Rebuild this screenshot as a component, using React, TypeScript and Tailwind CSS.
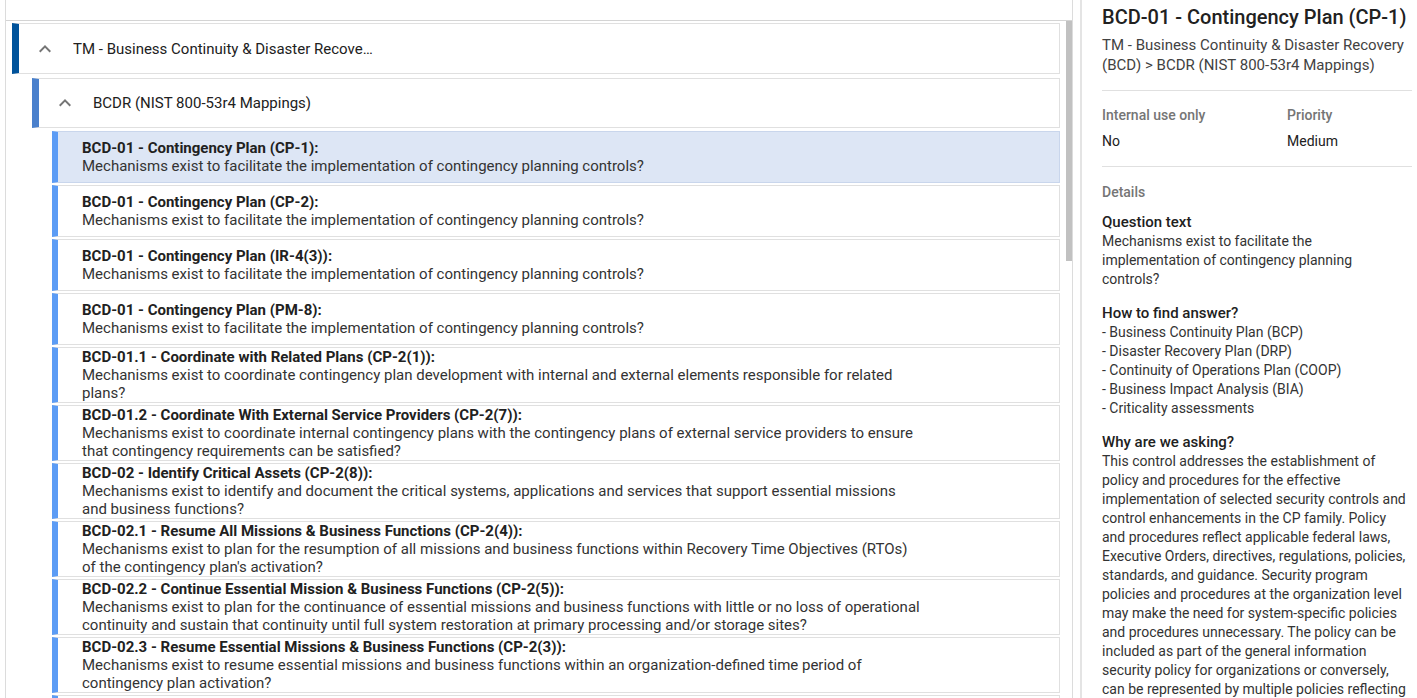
import React from 'react';

type Pregunta = {
  id: string;
  titulo: string;
  texto: string;
};

const PREGUNTAS: Pregunta[] = [
  {
    id: 'cp1',
    titulo: 'BCD-01 - Contingency Plan (CP-1):',
    texto: 'Mechanisms exist to facilitate the implementation of contingency planning controls?',
  },
  {
    id: 'cp2',
    titulo: 'BCD-01 - Contingency Plan (CP-2):',
    texto: 'Mechanisms exist to facilitate the implementation of contingency planning controls?',
  },
  {
    id: 'ir43',
    titulo: 'BCD-01 - Contingency Plan (IR-4(3)):',
    texto: 'Mechanisms exist to facilitate the implementation of contingency planning controls?',
  },
  {
    id: 'pm8',
    titulo: 'BCD-01 - Contingency Plan (PM-8):',
    texto: 'Mechanisms exist to facilitate the implementation of contingency planning controls?',
  },
  {
    id: 'cp21',
    titulo: 'BCD-01.1 - Coordinate with Related Plans (CP-2(1)):',
    texto:
      'Mechanisms exist to coordinate contingency plan development with internal and external elements responsible for related plans?',
  },
  {
    id: 'cp27',
    titulo: 'BCD-01.2 - Coordinate With External Service Providers (CP-2(7)):',
    texto:
      'Mechanisms exist to coordinate internal contingency plans with the contingency plans of external service providers to ensure that contingency requirements can be satisfied?',
  },
  {
    id: 'cp28',
    titulo: 'BCD-02 - Identify Critical Assets (CP-2(8)):',
    texto:
      'Mechanisms exist to identify and document the critical systems, applications and services that support essential missions and business functions?',
  },
  {
    id: 'cp24',
    titulo: 'BCD-02.1 - Resume All Missions & Business Functions (CP-2(4)):',
    texto:
      "Mechanisms exist to plan for the resumption of all missions and business functions within Recovery Time Objectives (RTOs) of the contingency plan's activation?",
  },
  {
    id: 'cp25',
    titulo: 'BCD-02.2 - Continue Essential Mission & Business Functions (CP-2(5)):',
    texto:
      'Mechanisms exist to plan for the continuance of essential missions and business functions with little or no loss of operational continuity and sustain that continuity until full system restoration at primary processing and/or storage sites?',
  },
  {
    id: 'cp23',
    titulo: 'BCD-02.3 - Resume Essential Missions & Business Functions (CP-2(3)):',
    texto:
      'Mechanisms exist to resume essential missions and business functions within an organization-defined time period of contingency plan activation?',
  },
  {
    id: 'cp3',
    titulo: 'BCD-03 - Contingency Training (CP-3):',
    texto:
      'Mechanisms exist to adequately train contingency personnel and applicable stakeholders in their contingency roles and responsibilities?',
  },
];

const COMO_ENCONTRAR = [
  '- Business Continuity Plan (BCP)',
  '- Disaster Recovery Plan (DRP)',
  '- Continuity of Operations Plan (COOP)',
  '- Business Impact Analysis (BIA)',
  '- Criticality assessments',
];

function Chevron() {
  return (
    <svg width="24" height="24" viewBox="0 0 24 24" className="shrink-0 fill-[#757575]">
      <path d="M12 8l-6 6 1.41 1.41L12 10.83l4.59 4.58L18 14z" />
    </svg>
  );
}

function FilaPregunta({ p, activa }: { p: Pregunta; activa: boolean }) {
  return (
    <div
      className={`mb-[2px] ml-[40px] flex min-h-[52px] items-center border border-l-[6px] border-l-[#5c9cf5] pl-[24px] ${
        activa ? 'border-[#c9d6ec] bg-[#dde6f5]' : 'border-[#e0e0e0] bg-white'
      }`}
    >
      <div className="max-w-[840px] text-[15px] leading-[18px]">
        <p className="font-bold text-[#212121]">{p.titulo}</p>
        <p className="text-[#333333]">{p.texto}</p>
      </div>
    </div>
  );
}

export default function App() {
  return (
    <div className="flex h-[698px] w-[1417px] overflow-hidden bg-white font-['Roboto','Liberation_Sans',sans-serif] text-[#212121]">
      {/* lista */}
      <div className="ml-[5px] flex w-[1068px] shrink-0 flex-col border-x border-[#dcdcdc]">
        <div className="h-[21px] shrink-0 border-b border-[#d4d4d4]" />
        <div className="flex min-h-0 flex-1">
          <div className="min-w-0 flex-1 overflow-hidden pl-[6px] pr-[5px] pt-[2px]">
            <div className="mb-[4px] flex h-[51px] items-center border border-[#e0e0e0] border-l-[7px] border-l-[#00539b] pl-[14px]">
              <Chevron />
              <span className="ml-[16px] mt-[2px] max-w-[301px] truncate text-[15px] text-[#212121]">
                TM - Business Continuity &amp; Disaster Recovery (BCD)
              </span>
            </div>
            <div className="mb-[3px] ml-[20px] flex h-[50px] items-center border border-[#e0e0e0] border-l-[7px] border-l-[#4a80cc] pl-[14px]">
              <Chevron />
              <span className="ml-[16px] mt-[1px] text-[15px] text-[#212121]">BCDR (NIST 800-53r4 Mappings)</span>
            </div>
            {PREGUNTAS.map((p, i) => (
              <FilaPregunta key={p.id} p={p} activa={i === 0} />
            ))}
          </div>
          <div className="w-[7px] shrink-0">
            <div className="ml-[1px] h-[240px] w-[6px] bg-[#c1c1c1]" />
          </div>
        </div>
      </div>

      <div className="w-[7px] shrink-0" />

      {/* detalle */}
      <div className="min-w-0 flex-1 border-l-2 border-[#e4e4e4] pl-[20px] pr-[5px] pt-[4px]">
        <h1 className="text-[20px] font-medium leading-[26px] text-[#212121]">BCD-01 - Contingency Plan (CP-1)</h1>
        <p className="mt-[5px] text-[15px] leading-[20px] text-[#424242]">
          TM - Business Continuity &amp; Disaster Recovery (BCD) &gt; BCDR (NIST 800-53r4 Mappings)
        </p>
        <div className="mt-[15px] h-px bg-[#e0e0e0]" />

        <div className="grid grid-cols-[185px_1fr] pt-[15px] text-[14px] leading-[19px]">
          <span className="font-medium text-[#757575]">Internal use only</span>
          <span className="font-medium text-[#757575]">Priority</span>
          <span className="mt-[7px] text-[#212121]">No</span>
          <span className="mt-[7px] text-[#212121]">Medium</span>
        </div>
        <div className="mt-[15px] h-px bg-[#e0e0e0]" />

        <p className="mt-[16px] text-[14px] font-medium leading-[19px] text-[#757575]">Details</p>

        <div className="w-[304px]">
          <h2 className="mt-[11px] text-[15px] font-medium leading-[19px] text-[#212121]">Question text</h2>
          <p className="text-[14px] leading-[19px] text-[#333333]">
            Mechanisms exist to facilitate the implementation of contingency planning controls?
          </p>

          <h2 className="mt-[15px] text-[15px] font-medium leading-[19px] text-[#212121]">How to find answer?</h2>
          <ul className="text-[14px] leading-[19px] text-[#333333]">
            {COMO_ENCONTRAR.map((l) => (
              <li key={l}>{l}</li>
            ))}
          </ul>

          <h2 className="mt-[15px] text-[15px] font-medium leading-[19px] text-[#212121]">Why are we asking?</h2>
          <p className="text-[14px] leading-[19px] text-[#333333]">
            This control addresses the establishment of policy and procedures for the effective implementation of
            selected security controls and control enhancements in the CP family. Policy and procedures reflect
            applicable federal laws, Executive Orders, directives, regulations, policies, standards, and guidance.
            Security program policies and procedures at the organization level may make the need for system-specific
            policies and procedures unnecessary. The policy can be included as part of the general information
            security policy for organizations or conversely, can be represented by multiple policies reflecting the
            complex nature of certain organizations.
          </p>
        </div>
      </div>
    </div>
  );
}
